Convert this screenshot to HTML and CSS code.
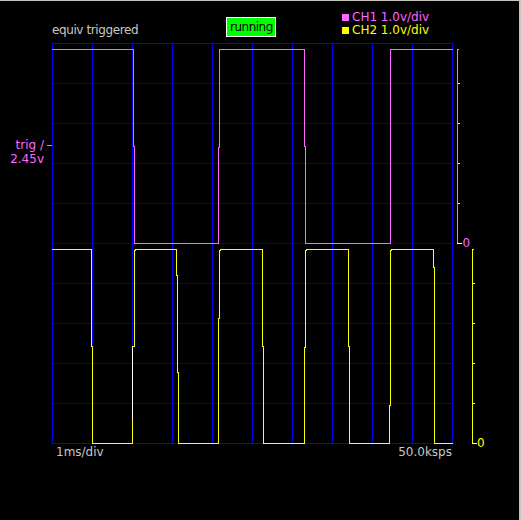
FILE: index.html
```html
<!DOCTYPE html>
<html>
<head>
<meta charset="utf-8">
<link rel="stylesheet" href="styles.css">
</head>
<body>
<div class="screen">
  <header class="top">
    <div class="status">equiv triggered</div>
    <div class="badge">running</div>
    <div class="legend">
      <div class="leg ch1"><span class="swatch"></span>CH1 1.0v/div</div>
      <div class="leg ch2"><span class="swatch"></span>CH2 1.0v/div</div>
    </div>
  </header>
  <div class="main">
    <div class="yaxis"><div class="trig">trig /<br>2.45v</div></div>
    <svg class="plot" width="469" height="402" viewBox="52 43 469 402" shape-rendering="crispEdges">
      <g class="grid-h">
        <line x1="52" y1="83.5" x2="453" y2="83.5"/>
        <line x1="52" y1="123.5" x2="453" y2="123.5"/>
        <line x1="52" y1="163.5" x2="453" y2="163.5"/>
        <line x1="52" y1="203.5" x2="453" y2="203.5"/>
        <line x1="52" y1="243.5" x2="453" y2="243.5"/>
        <line x1="52" y1="283.5" x2="453" y2="283.5"/>
        <line x1="52" y1="323.5" x2="453" y2="323.5"/>
        <line x1="52" y1="363.5" x2="453" y2="363.5"/>
        <line x1="52" y1="403.5" x2="453" y2="403.5"/>
      </g>
      <g class="grid-v">
        <line x1="52" y1="43.5" x2="453" y2="43.5"/>
        <line x1="52" y1="443.5" x2="453" y2="443.5"/>
        <line x1="52.5" y1="43" x2="52.5" y2="444"/>
        <line x1="92.5" y1="43" x2="92.5" y2="444"/>
        <line x1="132.5" y1="43" x2="132.5" y2="444"/>
        <line x1="172.5" y1="43" x2="172.5" y2="444"/>
        <line x1="212.5" y1="43" x2="212.5" y2="444"/>
        <line x1="252.5" y1="43" x2="252.5" y2="444"/>
        <line x1="292.5" y1="43" x2="292.5" y2="444"/>
        <line x1="332.5" y1="43" x2="332.5" y2="444"/>
        <line x1="372.5" y1="43" x2="372.5" y2="444"/>
        <line x1="412.5" y1="43" x2="412.5" y2="444"/>
        <line x1="452.5" y1="43" x2="452.5" y2="444"/>
      </g>
      <path class="tr1" d="M52,49.5 H133.5 V146.5 H134.5 V243.5 H218.5 V147.5 H219.5 V49.5 H304.5 V146.5 H305.5 V243.5 H390.5 V49.5 H453"/>
      <path class="tr2" d="M52,249.5 H91.5 V346.5 H92.5 V443.5 H132.5 V346.5 H134.5 V250.5 H135.5 V249.5 H176.5 V275.5 H177.5 V372.5 H178.5 V443.5 H218.5 V318.5 H219.5 V250.5 H220.5 V249.5 H262.5 V346.5 H263.5 V443.5 H304.5 V347.5 H305.5 V250.5 H306.5 V249.5 H348.5 V346.5 H349.5 V443.5 H389.5 V405.5 H390.5 V250.5 H391.5 V249.5 H433.5 V267.5 H434.5 V443.5 H453"/>
      <line class="hi" x1="132.5" y1="347" x2="132.5" y2="420"/>
      <line class="tr1" x1="47" y1="145.5" x2="52" y2="145.5"/>
      <path class="tr1" d="M459,49.5 H457.5 V243"/>
      <g class="tick">
        <line x1="458" y1="83.5" x2="460" y2="83.5"/>
        <line x1="458" y1="123.5" x2="460" y2="123.5"/>
        <line x1="458" y1="163.5" x2="460" y2="163.5"/>
        <line x1="458" y1="203.5" x2="460" y2="203.5"/>
        <line x1="457" y1="243.5" x2="462" y2="243.5"/>
      </g>
      <text class="lbl c1" x="462.5" y="247">0</text>
      <path class="tr2" d="M474,249.5 H472.5 V443"/>
      <g class="tick">
        <line x1="473" y1="283.5" x2="475" y2="283.5"/>
        <line x1="473" y1="323.5" x2="475" y2="323.5"/>
        <line x1="473" y1="363.5" x2="475" y2="363.5"/>
        <line x1="473" y1="403.5" x2="475" y2="403.5"/>
        <line x1="472" y1="443.5" x2="477" y2="443.5"/>
      </g>
      <text class="lbl c2" x="477" y="447">0</text>
    </svg>
  </div>
  <footer class="bottom"><span>1ms/div</span><span>50.0ksps</span></footer>
</div>
</body>
</html>
```
FILE: styles.css
```css
html, body {
  margin: 0;
  background: #000;
}
.screen {
  position: relative;
  width: 521px;
  height: 520px;
  display: flex;
  flex-direction: column;
  overflow: hidden;
  background: #000;
  color: #c8c8c8;
  font-family: "DejaVu Sans", sans-serif;
  font-size: 12px;
}
.screen::after {
  content: "";
  position: absolute;
  top: 0;
  left: 0;
  right: 0;
  bottom: 0;
  border-top: 1px solid #c8c4bc;
  border-right: 2px solid #c8c4bc;
  pointer-events: none;
}
.top {
  flex: none;
  height: 43px;
  box-sizing: border-box;
  padding-left: 52px;
  display: flex;
  align-items: flex-start;
}
.status {
  width: 174px;
  margin-top: 23px;
  line-height: 14px;
  letter-spacing: -0.4px;
  white-space: nowrap;
}
.badge {
  box-sizing: border-box;
  width: 50px;
  height: 20px;
  margin-top: 17px;
  padding-left: 3px;
  border: 1px solid #fff;
  background: #00ff00;
  color: #000;
  line-height: 18px;
  letter-spacing: -0.5px;
  white-space: nowrap;
}
.legend {
  margin-left: 66px;
  margin-top: 11px;
  line-height: 13px;
}
.leg {
  display: flex;
  align-items: flex-start;
  white-space: nowrap;
}
.swatch {
  width: 7px;
  height: 7px;
  margin-top: 3px;
  margin-right: 3px;
}
.ch1 { color: #ff66ff; }
.ch1 .swatch { background: #ff66ff; }
.ch2 { color: #ffff00; }
.ch2 .swatch { background: #ffff00; }
.main {
  flex: none;
  height: 402px;
  display: flex;
}
.yaxis {
  flex: none;
  width: 52px;
  box-sizing: border-box;
  padding-top: 95px;
  padding-right: 8px;
  text-align: right;
  color: #ff66ff;
  line-height: 14px;
}
.plot {
  flex: none;
  display: block;
  overflow: visible;
}
.grid-h line { stroke: #0000b4; stroke-width: 1; }
.grid-v line { stroke: #0000ff; stroke-width: 1; }
.tr1 { fill: none; stroke: #ff66ff; stroke-width: 1; }
.tr2 { fill: none; stroke: #ffff00; stroke-width: 1; }
.hi { stroke: #ffffff; stroke-width: 1; }
.tick line { stroke: #ffffff; stroke-width: 1; }
.lbl {
  font-family: "DejaVu Sans", sans-serif;
  font-size: 12px;
}
.c1 { fill: #ff66ff; }
.c2 { fill: #ffff00; }
.bottom {
  flex: none;
  display: flex;
  justify-content: space-between;
  padding: 0 69px 0 56px;
  line-height: 14px;
}
```
